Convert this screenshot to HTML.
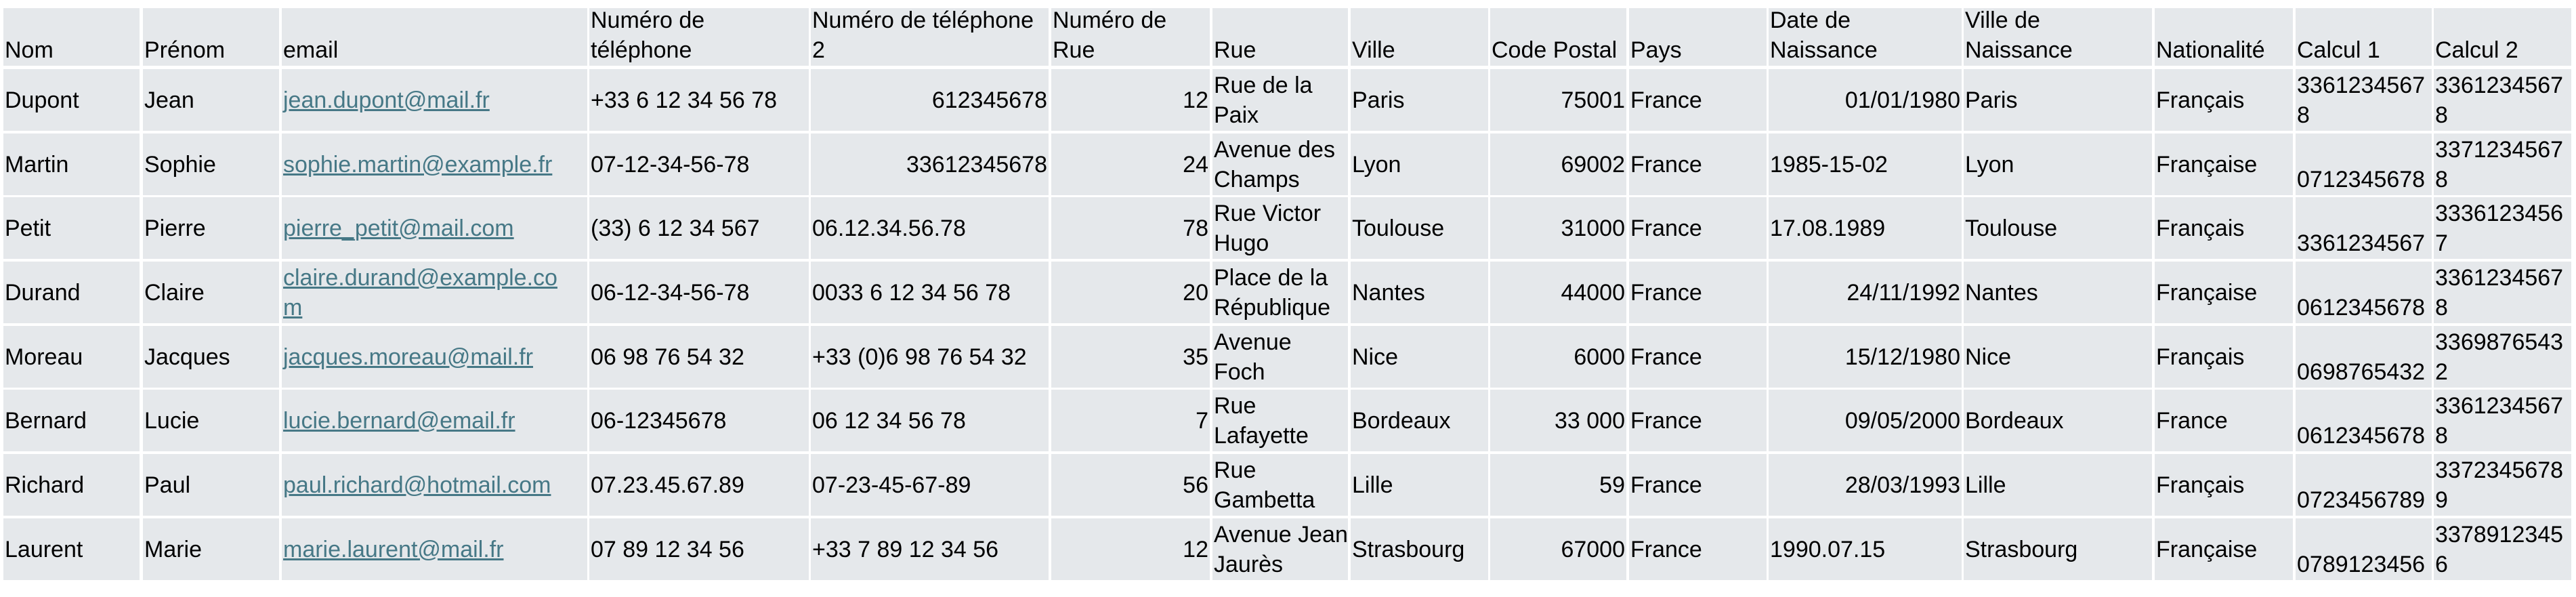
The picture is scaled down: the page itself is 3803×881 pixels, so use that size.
<!DOCTYPE html>
<html><head><meta charset="utf-8"><style>
html,body{margin:0;padding:0;background:#fff;width:3803px;height:881px;overflow:hidden}
body{position:relative;font-family:"Liberation Sans",Arial,sans-serif;font-size:34px;line-height:44px;color:#000}
.c{position:absolute;background:#e5e8eb;display:flex;align-items:center;padding:0 2px;box-sizing:border-box;white-space:nowrap;overflow:hidden}
.h{align-items:flex-end;padding-bottom:1px}
.R{justify-content:flex-end}
a{color:#467886;text-decoration:underline}
.r0{top:12px;height:85px}
.r1{top:102px;height:91px}.r2{top:197px;height:91px}.r3{top:291px;height:91px}.r4{top:386px;height:91px}
.r5{top:481px;height:91px}.r6{top:575px;height:91px}.r7{top:670px;height:91px}.r8{top:765px;height:91px}
.k1{left:5px;width:201px}.k2{left:211px;width:201px}.k3{left:416px;width:451px}.k4{left:870px;width:324px}
.k5{left:1197px;width:351px}.k6{left:1552px;width:234px}.k7{left:1790px;width:200px}.k8{left:1994px;width:203px}
.k9{left:2200px;width:201px}.k10{left:2405px;width:203px}.k11{left:2611px;width:285px}.k12{left:2899px;width:278px}
.k13{left:3181px;width:204px}.k14{left:3389px;width:201px}.k15{left:3593px;width:203px}
</style></head><body>
<div class="c h r0 k1"><span>Nom</span></div>
<div class="c h r0 k2"><span>Prénom</span></div>
<div class="c h r0 k3"><span>email</span></div>
<div class="c h r0 k4"><span>Numéro de<br>téléphone</span></div>
<div class="c h r0 k5"><span>Numéro de téléphone<br>2</span></div>
<div class="c h r0 k6"><span>Numéro de<br>Rue</span></div>
<div class="c h r0 k7"><span>Rue</span></div>
<div class="c h r0 k8"><span>Ville</span></div>
<div class="c h r0 k9"><span>Code Postal</span></div>
<div class="c h r0 k10"><span>Pays</span></div>
<div class="c h r0 k11"><span>Date de<br>Naissance</span></div>
<div class="c h r0 k12"><span>Ville de<br>Naissance</span></div>
<div class="c h r0 k13"><span>Nationalité</span></div>
<div class="c h r0 k14"><span>Calcul 1</span></div>
<div class="c h r0 k15"><span>Calcul 2</span></div>

<div class="c r1 k1"><span>Dupont</span></div>
<div class="c r1 k2"><span>Jean</span></div>
<div class="c r1 k3"><a>jean.dupont@mail.fr</a></div>
<div class="c r1 k4"><span>+33 6 12 34 56 78</span></div>
<div class="c R r1 k5"><span>612345678</span></div>
<div class="c R r1 k6"><span>12</span></div>
<div class="c r1 k7"><span>Rue de la<br>Paix</span></div>
<div class="c r1 k8"><span>Paris</span></div>
<div class="c R r1 k9"><span>75001</span></div>
<div class="c r1 k10"><span>France</span></div>
<div class="c R r1 k11"><span>01/01/1980</span></div>
<div class="c r1 k12"><span>Paris</span></div>
<div class="c r1 k13"><span>Français</span></div>
<div class="c r1 k14"><span>3361234567<br>8</span></div>
<div class="c r1 k15"><span>3361234567<br>8</span></div>

<div class="c r2 k1"><span>Martin</span></div>
<div class="c r2 k2"><span>Sophie</span></div>
<div class="c r2 k3"><a>sophie.martin@example.fr</a></div>
<div class="c r2 k4"><span>07-12-34-56-78</span></div>
<div class="c R r2 k5"><span>33612345678</span></div>
<div class="c R r2 k6"><span>24</span></div>
<div class="c r2 k7"><span>Avenue des<br>Champs</span></div>
<div class="c r2 k8"><span>Lyon</span></div>
<div class="c R r2 k9"><span>69002</span></div>
<div class="c r2 k10"><span>France</span></div>
<div class="c r2 k11"><span>1985-15-02</span></div>
<div class="c r2 k12"><span>Lyon</span></div>
<div class="c r2 k13"><span>Française</span></div>
<div class="c r2 k14"><span>&nbsp;<br>0712345678</span></div>
<div class="c r2 k15"><span>3371234567<br>8</span></div>

<div class="c r3 k1"><span>Petit</span></div>
<div class="c r3 k2"><span>Pierre</span></div>
<div class="c r3 k3"><a>pierre_petit@mail.com</a></div>
<div class="c r3 k4"><span>(33) 6 12 34 567</span></div>
<div class="c r3 k5"><span>06.12.34.56.78</span></div>
<div class="c R r3 k6"><span>78</span></div>
<div class="c r3 k7"><span>Rue Victor<br>Hugo</span></div>
<div class="c r3 k8"><span>Toulouse</span></div>
<div class="c R r3 k9"><span>31000</span></div>
<div class="c r3 k10"><span>France</span></div>
<div class="c r3 k11"><span>17.08.1989</span></div>
<div class="c r3 k12"><span>Toulouse</span></div>
<div class="c r3 k13"><span>Français</span></div>
<div class="c r3 k14"><span>&nbsp;<br>3361234567</span></div>
<div class="c r3 k15"><span>3336123456<br>7</span></div>

<div class="c r4 k1"><span>Durand</span></div>
<div class="c r4 k2"><span>Claire</span></div>
<div class="c r4 k3"><a>claire.durand@example.co<br>m</a></div>
<div class="c r4 k4"><span>06-12-34-56-78</span></div>
<div class="c r4 k5"><span>0033 6 12 34 56 78</span></div>
<div class="c R r4 k6"><span>20</span></div>
<div class="c r4 k7"><span>Place de la<br>République</span></div>
<div class="c r4 k8"><span>Nantes</span></div>
<div class="c R r4 k9"><span>44000</span></div>
<div class="c r4 k10"><span>France</span></div>
<div class="c R r4 k11"><span>24/11/1992</span></div>
<div class="c r4 k12"><span>Nantes</span></div>
<div class="c r4 k13"><span>Française</span></div>
<div class="c r4 k14"><span>&nbsp;<br>0612345678</span></div>
<div class="c r4 k15"><span>3361234567<br>8</span></div>

<div class="c r5 k1"><span>Moreau</span></div>
<div class="c r5 k2"><span>Jacques</span></div>
<div class="c r5 k3"><a>jacques.moreau@mail.fr</a></div>
<div class="c r5 k4"><span>06 98 76 54 32</span></div>
<div class="c r5 k5"><span>+33 (0)6 98 76 54 32</span></div>
<div class="c R r5 k6"><span>35</span></div>
<div class="c r5 k7"><span>Avenue<br>Foch</span></div>
<div class="c r5 k8"><span>Nice</span></div>
<div class="c R r5 k9"><span>6000</span></div>
<div class="c r5 k10"><span>France</span></div>
<div class="c R r5 k11"><span>15/12/1980</span></div>
<div class="c r5 k12"><span>Nice</span></div>
<div class="c r5 k13"><span>Français</span></div>
<div class="c r5 k14"><span>&nbsp;<br>0698765432</span></div>
<div class="c r5 k15"><span>3369876543<br>2</span></div>

<div class="c r6 k1"><span>Bernard</span></div>
<div class="c r6 k2"><span>Lucie</span></div>
<div class="c r6 k3"><a>lucie.bernard@email.fr</a></div>
<div class="c r6 k4"><span>06-12345678</span></div>
<div class="c r6 k5"><span>06 12 34 56 78</span></div>
<div class="c R r6 k6"><span>7</span></div>
<div class="c r6 k7"><span>Rue<br>Lafayette</span></div>
<div class="c r6 k8"><span>Bordeaux</span></div>
<div class="c R r6 k9"><span>33 000</span></div>
<div class="c r6 k10"><span>France</span></div>
<div class="c R r6 k11"><span>09/05/2000</span></div>
<div class="c r6 k12"><span>Bordeaux</span></div>
<div class="c r6 k13"><span>France</span></div>
<div class="c r6 k14"><span>&nbsp;<br>0612345678</span></div>
<div class="c r6 k15"><span>3361234567<br>8</span></div>

<div class="c r7 k1"><span>Richard</span></div>
<div class="c r7 k2"><span>Paul</span></div>
<div class="c r7 k3"><a>paul.richard@hotmail.com</a></div>
<div class="c r7 k4"><span>07.23.45.67.89</span></div>
<div class="c r7 k5"><span>07-23-45-67-89</span></div>
<div class="c R r7 k6"><span>56</span></div>
<div class="c r7 k7"><span>Rue<br>Gambetta</span></div>
<div class="c r7 k8"><span>Lille</span></div>
<div class="c R r7 k9"><span>59</span></div>
<div class="c r7 k10"><span>France</span></div>
<div class="c R r7 k11"><span>28/03/1993</span></div>
<div class="c r7 k12"><span>Lille</span></div>
<div class="c r7 k13"><span>Français</span></div>
<div class="c r7 k14"><span>&nbsp;<br>0723456789</span></div>
<div class="c r7 k15"><span>3372345678<br>9</span></div>

<div class="c r8 k1"><span>Laurent</span></div>
<div class="c r8 k2"><span>Marie</span></div>
<div class="c r8 k3"><a>marie.laurent@mail.fr</a></div>
<div class="c r8 k4"><span>07 89 12 34 56</span></div>
<div class="c r8 k5"><span>+33 7 89 12 34 56</span></div>
<div class="c R r8 k6"><span>12</span></div>
<div class="c r8 k7"><span>Avenue Jean<br>Jaurès</span></div>
<div class="c r8 k8"><span>Strasbourg</span></div>
<div class="c R r8 k9"><span>67000</span></div>
<div class="c r8 k10"><span>France</span></div>
<div class="c r8 k11"><span>1990.07.15</span></div>
<div class="c r8 k12"><span>Strasbourg</span></div>
<div class="c r8 k13"><span>Française</span></div>
<div class="c r8 k14"><span>&nbsp;<br>0789123456</span></div>
<div class="c r8 k15"><span>3378912345<br>6</span></div>
</body></html>
